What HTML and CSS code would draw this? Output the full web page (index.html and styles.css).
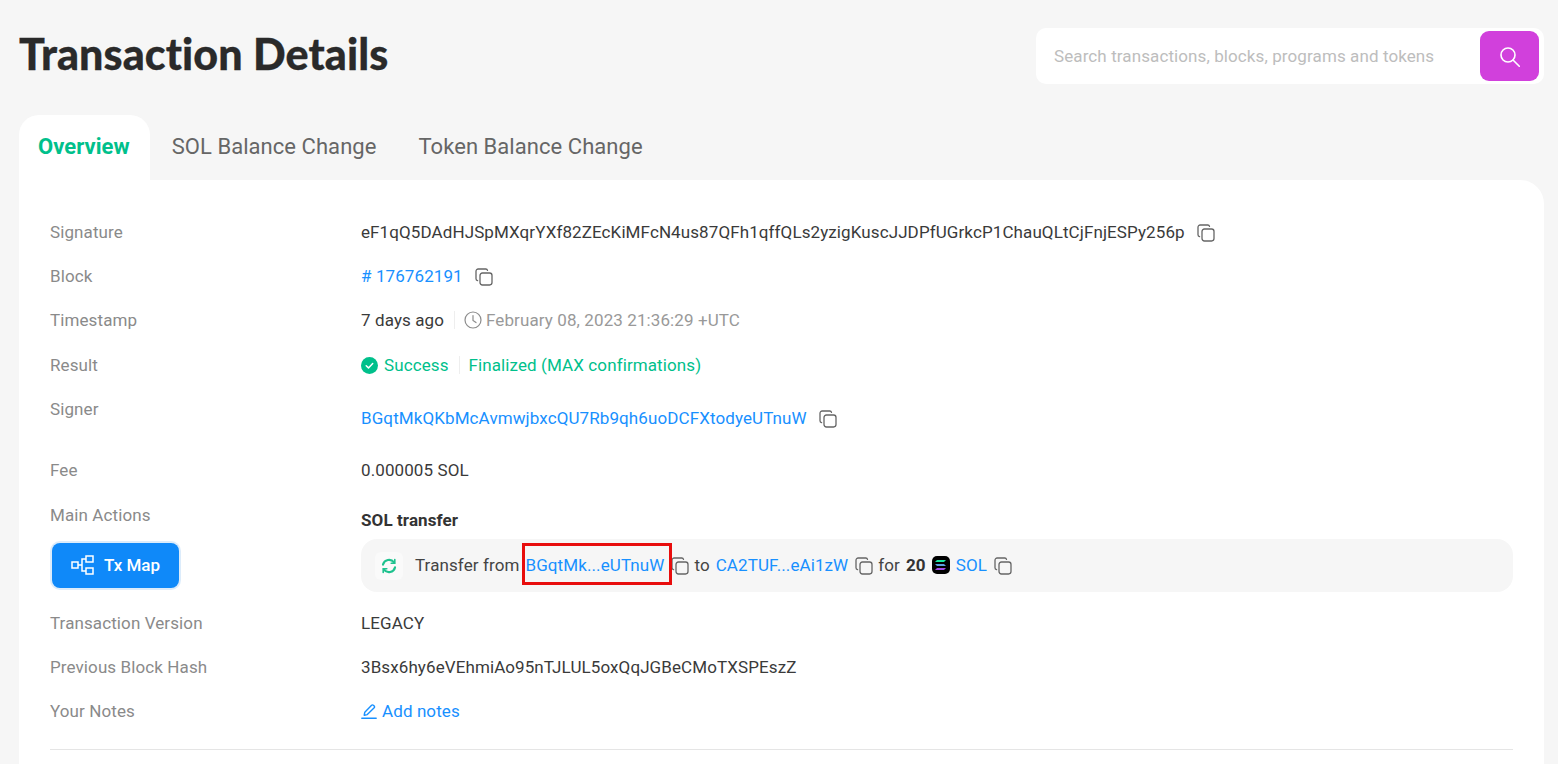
FILE: index.html
```html
<!DOCTYPE html>
<html lang="en">
<head>
  <meta charset="UTF-8" />
  <title>Transaction Details</title>
  <link rel="stylesheet" href="styles.css">
</head>
<body>
  <svg class="sprites" width="0" height="0">
    <symbol id="copy" viewBox="0 0 18 18">
      <path d="M2.600 12.600A1.800 1.800 0 0 1 1 10.800V3.200A2.200 2.200 0 0 1 3.200 1h7.600a1.800 1.800 0 0 1 1.700 1.400" fill="none" stroke="currentColor" stroke-width="1.300" stroke-linecap="round"/>
      <rect x="5" y="5" width="12" height="12" rx="2.400" fill="none" stroke="currentColor" stroke-width="1.300"/>
    </symbol>
  </svg>

  <header class="top">
    <h1>Transaction Details</h1>
    <div class="search">
      <span class="search-text">Search transactions, blocks, programs and tokens</span>
      <button class="search-btn" aria-label="Search">
        <svg class="search-icon" width="20" height="20" viewBox="0 0 20 20" fill="none" stroke="#fff" stroke-width="1.600" stroke-linecap="round"><circle cx="8" cy="8" r="7"/><path d="M13 13L19.300 19.300"/></svg>
      </button>
    </div>
  </header>

  <nav class="tabs">
    <a class="tab active">Overview</a>
    <a class="tab">SOL Balance Change</a>
    <a class="tab">Token Balance Change</a>
  </nav>

  <section class="card">
    <div class="row">
      <div class="label">Signature</div>
      <div class="value">eF1qQ5DAdHJSpMXqrYXf82ZEcKiMFcN4us87QFh1qffQLs2yzigKuscJJDPfUGrkcP1ChauQLtCjFnjESPy256p <svg class="copy wide"><use href="#copy"/></svg></div>
    </div>
    <div class="row">
      <div class="label">Block</div>
      <div class="value"><a class="link"># 176762191</a> <svg class="copy wide"><use href="#copy"/></svg></div>
    </div>
    <div class="row">
      <div class="label">Timestamp</div>
      <div class="value">
        <span>7 days ago</span>
        <span class="sep"></span>
        <svg class="clock" width="18" height="18" viewBox="0 0 18 18" fill="none" stroke="#8c8c8c" stroke-width="1.200" stroke-linecap="round"><circle cx="9" cy="9" r="8"/><path d="M9 4.500V9.400l3 2.200"/></svg>
        <span class="muted">February 08, 2023 21:36:29 +UTC</span>
      </div>
    </div>
    <div class="row row-result">
      <div class="label">Result</div>
      <div class="value green">
        <svg class="check" width="17" height="17" viewBox="0 0 17 17"><circle cx="8.500" cy="8.500" r="8.500" fill="#00c08b"/><path d="M5.200 8.700l2.300 2.200 4.200-4.400" fill="none" stroke="#fff" stroke-width="1.500" stroke-linecap="round" stroke-linejoin="round"/></svg>
        <span>Success</span>
        <span class="sep"></span>
        <span>Finalized (MAX confirmations)</span>
      </div>
    </div>
    <div class="row row-signer">
      <div class="label">Signer</div>
      <div class="value"><a class="link">BGqtMkQKbMcAvmwjbxcQU7Rb9qh6uoDCFXtodyeUTnuW</a> <svg class="copy wide"><use href="#copy"/></svg></div>
    </div>
    <div class="row">
      <div class="label">Fee</div>
      <div class="value">0.000005 SOL</div>
    </div>

    <div class="row row-actions">
      <div class="actions-left">
        <div class="label">Main Actions</div>
        <button class="txmap">
          <svg width="24" height="20" viewBox="0 0 24 20" fill="none" stroke="#fff" stroke-width="1.500"><rect x="1" y="7" width="6" height="6"/><rect x="15" y="1" width="7" height="6"/><rect x="15" y="13" width="7" height="6"/><path d="M7 10h4M15 4h-4v12h4"/></svg>
          Tx Map
        </button>
      </div>
      <div class="actions-right">
        <div class="action-title">SOL transfer</div>
        <div class="action-box">
          <span class="action-icon">
            <svg width="16" height="16" viewBox="0 0 16 16" fill="none" stroke="#1ec28e" stroke-width="2.200" stroke-linecap="round"><path d="M2 6.600A6.200 6.200 0 0 1 13 4.400"/><path d="M14 9.400A6.200 6.200 0 0 1 3 11.600"/><path d="M13.800 1.600v3.600h-3.600" stroke-width="1.600"/><path d="M2.200 14.400v-3.600h3.600" stroke-width="1.600"/></svg>
          </span>
          <span class="word first">Transfer from</span>
          <a class="link marked">BGqtMk...eUTnuW<span class="red-box"></span></a>
          <svg class="copy"><use href="#copy"/></svg>
          <span class="word">to</span>
          <a class="link">CA2TUF...eAi1zW</a>
          <svg class="copy"><use href="#copy"/></svg>
          <span class="word">for</span>
          <b class="amount">20</b>
          <span class="sol-logo">
            <svg width="11" height="10" viewBox="0 0 11 10"><path d="M2 0h9L9 2H0z" fill="#19e6a0"/><path d="M0 4h9l2 2H2z" fill="#5b9fe0"/><path d="M2 8h9L9 10H0z" fill="#a24be8"/></svg>
          </span>
          <a class="link sol-link">SOL</a>
          <svg class="copy"><use href="#copy"/></svg>
        </div>
      </div>
    </div>

    <div class="row">
      <div class="label">Transaction Version</div>
      <div class="value">LEGACY</div>
    </div>
    <div class="row">
      <div class="label">Previous Block Hash</div>
      <div class="value">3Bsx6hy6eVEhmiAo95nTJLUL5oxQqJGBeCMoTXSPEszZ</div>
    </div>
    <div class="row">
      <div class="label">Your Notes</div>
      <div class="value">
        <a class="link notes">
          <svg width="16" height="16" viewBox="0 0 16 16" fill="none" stroke="currentColor" stroke-width="1.400" stroke-linejoin="round" stroke-linecap="round"><path d="M3.200 12.200l.6-3L10.600 2.200a1.200 1.200 0 0 1 1.700 0l.9.9a1.200 1.200 0 0 1 0 1.700L6.300 11.600z"/><path d="M.8 15.200h14.400"/></svg>
          Add notes
        </a>
      </div>
    </div>
    <hr class="divider">
  </section>
</body>
</html>
```

FILE: styles.css
```css
html, body {
  height: 764px;
  overflow: hidden;
}

body {
  margin: 0;
  background-color: #f6f6f6;
  color: #333;
  font-family: Roboto, sans-serif;
  font-size: 17px;
  letter-spacing: 0.1px;
  line-height: 22px;
}

.sprites {
  position: absolute;
}

.top {
  display: flex;
  justify-content: space-between;
  align-items: flex-start;
  height: 115px;
  padding: 28px 14px 0 19px;
  box-sizing: border-box;
}

h1 {
  margin: 0;
  padding-top: 2px;
  font-family: Lato, sans-serif;
  font-weight: 900;
  font-size: 43px;
  font-variant-ligatures: none;
  letter-spacing: 0.1px;
  line-height: 48px;
  color: #2a2a2a;
  -webkit-text-stroke: 0.3px #2a2a2a;
}

.search {
  display: flex;
  justify-content: space-between;
  align-items: center;
  width: 508px;
  height: 56px;
  padding: 0 5px 0 18px;
  box-sizing: border-box;
  background-color: white;
  border-radius: 10px;
}

.search-text {
  color: #bdbdbd;
}

.search-btn {
  display: flex;
  align-items: center;
  justify-content: center;
  width: 59px;
  height: 50px;
  border: none;
  border-radius: 9px;
  background-color: #d140dc;
}

.search-icon {
  margin-top: 2px;
}

.tabs {
  display: flex;
  height: 65px;
  margin-left: 19px;
}

.tab {
  padding: 0 21px;
  font-size: 22px;
  letter-spacing: 0.05px;
  line-height: 63px;
  color: #666;
}

.tab.active {
  padding: 0 20px 0 19px;
  margin-right: 1px;
  background-color: white;
  border-radius: 20px 20px 0 0;
  color: #00c08b;
  font-weight: 700;
}

.card {
  height: 584px;
  margin: 0 14px 0 19px;
  padding: 30px 31px 0;
  box-sizing: border-box;
  background-color: white;
  border-radius: 0 24px 0 0;
}

.row {
  display: flex;
  align-items: center;
  height: 44px;
}

.row-result {
  margin-top: 1px;
}

.label {
  flex: none;
  width: 311px;
  color: #8a8a8a;
}

.value {
  display: flex;
  align-items: center;
  color: #3a3a3a;
}

.link {
  color: #1890ff;
}

.muted {
  color: #999;
}

.green {
  color: #00c08b;
}

.copy {
  flex: none;
  width: 18px;
  height: 18px;
  margin-top: 2px;
  margin-left: 7px;
  color: #666;
}

.copy.wide {
  margin-left: 12px;
}

.sep {
  width: 1px;
  height: 18px;
  margin: 0 9px 0 10px;
  background-color: #eee;
}

.clock {
  margin-right: 4px;
}

.check {
  margin-right: 6px;
}

.row-signer {
  height: 61px;
  align-items: flex-start;
}

.row-signer .label {
  margin-top: 11px;
}

.row-signer .value {
  margin-top: 20px;
}

.row-actions {
  height: 108px;
  margin-top: 1px;
  align-items: flex-start;
}

.actions-left {
  flex: none;
  width: 311px;
}

.actions-left .label {
  margin-top: 11px;
}

.txmap {
  display: flex;
  align-items: center;
  gap: 9px;
  width: 127px;
  height: 45px;
  margin: 17px 0 0 2px;
  padding: 0 0 2px 19px;
  border: none;
  border-radius: 8px;
  background-color: #0f89f9;
  box-shadow: 0 0 0 2px #dcecfb;
  color: white;
  font-family: Roboto, sans-serif;
  font-size: 17px;
  font-weight: 500;
}

.actions-right {
  flex: 1;
}

.action-title {
  margin-top: 16px;
  font-weight: 700;
  color: #333;
}

.action-box {
  display: flex;
  align-items: center;
  height: 53px;
  margin-top: 8px;
  padding: 0 0 2px 14px;
  box-sizing: border-box;
  background-color: #f6f6f6;
  border-radius: 16px;
  color: #444;
}

.action-box .copy {
  margin-top: 3px;
}

.action-icon {
  display: flex;
  align-items: center;
  justify-content: center;
  width: 28px;
  height: 28px;
  margin-top: 2px;
  border-radius: 6px;
  background-color: #fafafa;
}

.word {
  margin-left: 5px;
}

.word.first {
  margin-left: 12px;
}

.marked {
  position: relative;
  margin-left: 6px;
}

.action-box .link:not(.marked) {
  margin-left: 6px;
}

.red-box {
  position: absolute;
  left: -3px;
  top: -11px;
  width: 150px;
  height: 42px;
  box-sizing: border-box;
  border: 3px solid #e80d0d;
}

.amount {
  margin-left: 6px;
  color: #333;
}

.sol-logo {
  display: flex;
  align-items: center;
  justify-content: center;
  width: 18px;
  height: 18px;
  margin-left: 6px;
  background-color: #000;
  border-radius: 5px;
}

.action-box .sol-link {
  margin-left: 7px;
}

.notes {
  display: flex;
  align-items: center;
  gap: 5px;
}

.divider {
  margin: 16px 0 0;
  border: none;
  border-top: 1px solid #e5e5e5;
}
```
